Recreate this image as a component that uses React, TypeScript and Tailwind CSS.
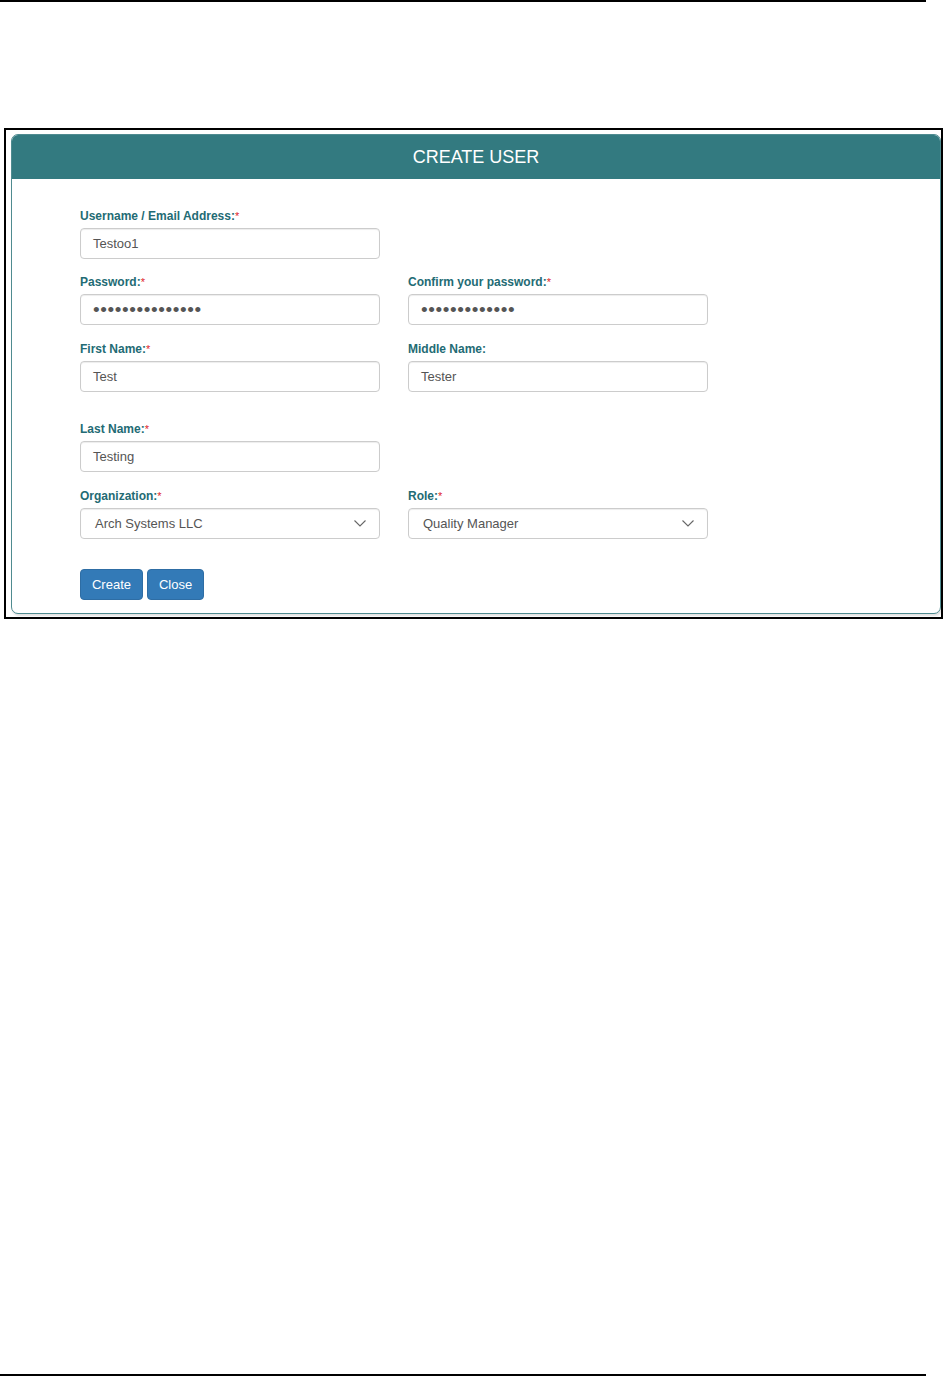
import React from "react";

const LABEL = "text-[12px] font-bold leading-[16px] h-[16px] text-[#236b74] whitespace-nowrap";
const BOX =
  "mt-[4px] h-[31px] w-[300px] rounded-[4px] border border-[#cccccc] bg-white flex items-center text-[13px] text-[#555555] shadow-[inset_0_1px_1px_rgba(0,0,0,0.075)]";

function Label({ text, req = true }: { text: string; req?: boolean }) {
  return (
    <div className={LABEL}>
      {text}
      {req && <span className="text-[#e0252b] font-normal align-top text-[11px]">*</span>}
    </div>
  );
}

function TextField({ label, value, req = true }: { label: string; value: string; req?: boolean }) {
  return (
    <div className="flex flex-col">
      <Label text={label} req={req} />
      <div className={BOX + " pl-[12px]"}>{value}</div>
    </div>
  );
}

function PasswordField({ label, count }: { label: string; count: number }) {
  return (
    <div className="flex flex-col">
      <Label text={label} />
      <div className={BOX + " pl-[12px]"}>
        <span className="text-[19px] leading-none tracking-[0.6px] text-[#555555]">
          {"•".repeat(count)}
        </span>
      </div>
    </div>
  );
}

function SelectField({ label, value }: { label: string; value: string }) {
  return (
    <div className="flex flex-col">
      <Label text={label} />
      <div className={BOX + " pl-[14px] pr-[13px] justify-between"}>
        <span>{value}</span>
        <svg width="12" height="7" viewBox="0 0 12 7" fill="none">
          <path d="M0.5 0.5 L6 6 L11.5 0.5" stroke="#666666" strokeWidth="1.1" />
        </svg>
      </div>
    </div>
  );
}

export default function App() {
  return (
    <div
      className="relative w-[943px] h-[1377px] bg-white overflow-hidden"
      style={{ fontFamily: '"Liberation Sans", Arial, sans-serif' }}
    >
      <div className="h-[2px] w-[926px] bg-black" />
      <div className="mt-[126px] ml-[4px] w-[939px] border-2 border-black pt-[4px] pl-[5px] pr-0 pb-[3px]">
        <div className="rounded-[7px] border border-[#4f8b90] overflow-hidden bg-white shadow-[1px_2px_2px_rgba(0,0,0,0.12)]">
          <div className="h-[44px] bg-[#337a80] flex items-center justify-center text-white text-[18px]">
            CREATE USER
          </div>
          <div className="pl-[68px] pt-[29px] pb-[13px]">
            <div className="grid grid-cols-[300px_300px] gap-x-[28px]">
              <TextField label="Username / Email Address:" value="Testoo1" />
              <div />
            </div>
            <div className="grid grid-cols-[300px_300px] gap-x-[28px] mt-[15px]">
              <PasswordField label="Password:" count={15} />
              <PasswordField label="Confirm your password:" count={13} />
            </div>
            <div className="grid grid-cols-[300px_300px] gap-x-[28px] mt-[16px]">
              <TextField label="First Name:" value="Test" />
              <TextField label="Middle Name:" value="Tester" req={false} />
            </div>
            <div className="grid grid-cols-[300px_300px] gap-x-[28px] mt-[29px]">
              <TextField label="Last Name:" value="Testing" />
              <div />
            </div>
            <div className="grid grid-cols-[300px_300px] gap-x-[28px] mt-[16px]">
              <SelectField label="Organization:" value="Arch Systems LLC" />
              <SelectField label="Role:" value="Quality Manager" />
            </div>
            <div className="flex gap-[4px] mt-[30px]">
              <button className="h-[31px] w-[63px] rounded-[4px] bg-[#337ab7] border border-[#2e6da4] text-white text-[13px]">
                Create
              </button>
              <button className="h-[31px] w-[57px] rounded-[4px] bg-[#337ab7] border border-[#2e6da4] text-white text-[13px]">
                Close
              </button>
            </div>
          </div>
        </div>
      </div>
      <div className="absolute left-0 top-[1374px] h-[2px] w-[926px] bg-black" />
    </div>
  );
}
